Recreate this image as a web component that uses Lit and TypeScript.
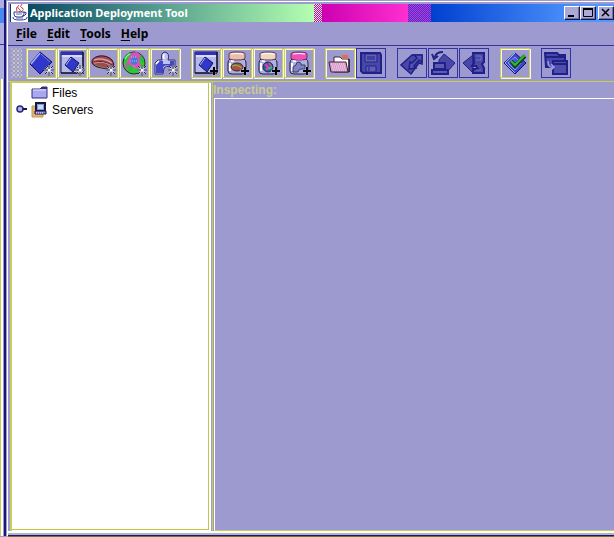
import { LitElement, html, css, svg } from "lit";
import { customElement, property } from "lit/decorators.js";

const star = svg`
  <path d="M20 14v11M15 19h10M17 16l6 6M23 16l-6 6" stroke="#c8c8e8" stroke-width="2"/>
  <path d="M20 14v4M20 21v4M15 19h4M22 19h3M16 15l2 2M22 21l2 2M24 15l-2 2M18 21l-2 2" stroke="#282838" stroke-width="1"/>
  <path d="M19 18h2v2h-2z" fill="#fff"/>`;
const plus = svg`
  <path d="M20 16v9M15 20h10" stroke="#b8b8dc" stroke-width="3" opacity=".6"/>
  <path d="M20 16v8M16 20h8" stroke="#000" stroke-width="2"/>`;
const frame = svg`
  <path d="M1 1h22v21H1z" fill="#b4b8ec" stroke="#181848" stroke-width="1"/>
  <path d="M1 1h22v3H1z" fill="#3030b8"/><path d="M2 5h20" stroke="#fff"/>
  <path d="M1 22h22V1" fill="none" stroke="#000"/>
  <path d="M11 6l8 6-6 9-8-7z" fill="#3038c8" stroke="#101060"/>
  <path d="M11 7l-5 7" stroke="#b0b8ff"/>`;
const jar = (lid: string) => svg`
  <path d="M5 8Q3 9 3 12v8q0 3 4 3h10q4 0 4-3v-8q0-3-2-4z" fill="#b0b0e0" stroke="#202040"/>
  <path d="M5 12v8M6 10h3" stroke="#fff" stroke-width="2"/>
  <path d="M4 3q0-2 8-2t8 2v4q0 2-8 2t-8-2z" fill="${lid}" stroke="#603860"/>
  <path d="M6 3q6-1 12 0" stroke="#fff" fill="none"/>`;
const bean = svg`
  <path d="M1 12Q0 7 8 5q8-1 13 4 3 4 1 7-3 3-11 1-8-1-10-5z" fill="#a04858" stroke="#301020"/>
  <path d="M3 9q9-3 18 3M3 12q10-3 18 3" fill="none" stroke="#d8a090" stroke-width="1.5"/>
  <path d="M3 11q10-2 18 3" fill="none" stroke="#602030"/>
  <path d="M4 14q7 3 13 3" fill="none" stroke="#689038"/>`;

const D = "#202088";
const M = "#4848aa";
const icons: Record<string, unknown> = {
  app: svg`<path d="M11 1l12 10-12 12L1 13z" fill="#3038cc" stroke="#14145c"/>
    <path d="M11 2L2 13" stroke="#a8b0ff" stroke-width="1.5"/><path d="M12 3l9 8" stroke="#7080f0"/>${star}`,
  client: svg`${frame}${star}`,
  bean: svg`${bean}${star}`,
  web: svg`<circle cx="12" cy="12" r="11" fill="#30c830" stroke="#183818"/>
    <path d="M8 2l7-1 5 4-3 6 2 4-5 3-5-3-4 3-3-3 4-5z" fill="#d850b8"/>
    <path d="M12 5l4 3-1 5-4 1-3-4z" fill="#4878d8"/>
    <path d="M3 8q3-5 6-5M5 14l4 3-2 3M18 6l3 5" stroke="#30b840" fill="none" stroke-width="3"/>
    <path d="M3 8q2-4 5-5" stroke="#c8ffc8"/>
    <path d="M9 6h6M8 10h8M11 14l2 3" stroke="#80d8f0" stroke-dasharray="1 1"/>${star}`,
  resource: svg`<path d="M9 9Q7 2 12 1q5 1 3 8h7v7h-5q-4-2-6 1l-1 6H2V12l3-3z" fill="#c0c0f0" stroke="#303070"/>
    <path d="M3 14l3-4h4v3h7v-3h4v5h-4q-6-2-7 2v5H3z" fill="#4048c8"/><path d="M11 3q-1 3 0 5M3 13l3-3" stroke="#fff" stroke-width="1.5" fill="none"/>${star}`,
  addClient: svg`${frame}${plus}`,
  addBean: svg`${jar("#e8c0a8")}<ellipse cx="12" cy="16" rx="6" ry="4" fill="#a85048" stroke="#402020"/>
    <path d="M7 15q5-2 10 2" stroke="#80b040" fill="none" stroke-width="1.5"/>${plus}`,
  addWeb: svg`${jar("#f0d8c0")}<circle cx="12" cy="16" r="5" fill="#3058b8" stroke="#182848"/>
    <path d="M9 13l3 3-2 3M13 12l2 3" stroke="#e040a0" stroke-width="2"/><path d="M12 18l4-2" stroke="#30c858" stroke-width="2"/>${plus}`,
  addResource: svg`${jar("#f050b8")}<path d="M6 6q6 3 12 0" stroke="#f050b8" stroke-width="3"/>
    <path d="M6 21v-5l3-2q0-3 3-3 3 1 2 3h4v4h-3q-3-1-4 3z" fill="#8084c0" stroke="#383868"/>${plus}`,
  open: svg`<path d="M6 6h6l2 2h7v13H6z" fill="#fff" stroke="#402838"/><path d="M14 4h6v4h-6z" fill="#d87058"/>
    <path d="M1 11h17l2 10H3z" fill="#d8a0cc" stroke="#482038"/>
    <path d="M3 13h14M4 15h14M4 17h14M5 19h14" stroke="#f4d8f0" stroke-dasharray="1 1"/><path d="M21 8v13" stroke="#000"/>`,
  save: svg`<path d="M2 2h19l1 2v18H4l-2-2z" fill="${M}" stroke="${D}" stroke-width="2"/>
    <path d="M6 3h12v8H6zM7 15h10v6H7z" fill="#6060b4" stroke="${D}"/><path d="M8 6h8M8 8h8M10 16v4" stroke="${D}"/>`,
  update: svg`<path d="M12 4h10v9l-3-1-8 11L1 14z" fill="${M}" stroke="${D}" stroke-width="1.5"/>
    <path d="M14 4h8v7l-3-2-5 6 2 2-7 1 1-7 2 1 5-5z" fill="#5454b0" stroke="${D}" stroke-width="1.5"/>`,
  deploy: svg`<path d="M13 3l11 9-8 9H8V9z" fill="${M}" stroke="${D}"/><path d="M12 1Q5 1 4 6M1 3l2 5 4-3" fill="none" stroke="${D}" stroke-width="2"/>
    <path d="M3 12h11v6H3zM1 19h16v4H1z" fill="#5c5cb0" stroke="${D}" stroke-width="2"/>`,
  undeploy: svg`<path d="M11 4L1 12l10 10z" fill="${M}" stroke="${D}"/>
    <path d="M11 2h11v9l-2 2 2 4v5H11v-4h5l-2-3h-4l2-3z" fill="${M}" stroke="${D}" stroke-width="2"/><path d="M14 5h5v4h-5M14 19h5" fill="none" stroke="#7070bc"/>`,
  verify: svg`<path d="M12 2l11 10-11 11L1 12z" fill="#3848c8" stroke="#14145c"/>
    <path d="M12 2L2 12l10 10" stroke="#a8b0ff" fill="none"/><path d="M12 6l6 6-6 7-7-7z" fill="#4858e0" stroke="#8898ff"/>
    <path d="M8 10l4 5L22 5" fill="none" stroke="#104010" stroke-width="4"/><path d="M8 10l4 4L22 4" fill="none" stroke="#30b838" stroke-width="2"/>`,
  windows: svg`<path d="M1 2h12l2 2h6v12H2z" fill="${M}" stroke="${D}" stroke-width="2"/><path d="M2 6h18" stroke="${D}" stroke-width="2"/>
    <path d="M9 10h14v13H9z" fill="#5050ac" stroke="${D}" stroke-width="2"/><path d="M9 13h14" stroke="${D}" stroke-width="2"/>
    <path d="M4 10q0 7 5 6M7 13l3 3-3 3" fill="none" stroke="#9c9ae0" stroke-width="1.5"/>`,
};

@customElement("tool-button")
class ToolButton extends LitElement {
  @property() icon = "";
  @property() label = "";
  @property({ type: Boolean }) off = false;
  static styles = css`
    :host { display: block; flex: none; }
    button {
      display: block; width: 30px; height: 30px; margin: 0 1px 1px 0; padding: 2px;
      border: 1px solid #cccf50; background: #9c9ace;
      box-shadow: inset 1px 1px #f8f8e8, 1px 1px #f8f8e8;
    }
    button:disabled { border-color: #3434a0; box-shadow: none; }
    svg { display: block; width: 24px; height: 24px; overflow: visible; fill: none; }
  `;
  render() {
    return html`<button aria-label=${this.label} ?disabled=${this.off}>
      <svg viewBox="0 0 24 24" aria-hidden="true">${icons[this.icon]}</svg>
    </button>`;
  }
}

type Tool = [icon: string, label: string, off?: boolean];
const groups: Tool[][] = [
  [["app", "New application"], ["client", "New client"], ["bean", "New bean"], ["web", "New web component"], ["resource", "New resource"]],
  [["addClient", "Add client"], ["addBean", "Add bean"], ["addWeb", "Add web component"], ["addResource", "Add resource"]],
  [["open", "Open"], ["save", "Save", true]],
  [["update", "Update", true], ["deploy", "Deploy", true], ["undeploy", "Undeploy", true]],
  [["verify", "Verify"]],
  [["windows", "Windows", true]],
];

@customElement("app-root")
class AppRoot extends LitElement {
  static styles = css`
    :host {
      display: grid; grid-template-columns: 7px minmax(0, 1fr); height: 100vh; overflow: hidden;
      background: #9c9ace; color: #000; font: 12px/16px "Liberation Sans", Arial, sans-serif;
    }
    * { box-sizing: border-box; }
    .behind {
      display: flex; flex-direction: column; width: 6px; margin-bottom: 1px;
      border-right: 2px solid #181878; background: #b0aee0;
    }
    .behind-title { height: 15px; margin-top: 8px; background: #4888f0; }
    .behind-menu { height: 22px; border-bottom: 1px solid #3434a0; }
    .behind-page { flex: 1; margin-top: 34px; border-left: 1px solid #c8cc58; border-right: 1px solid #9c9ace; background: #fff; }
    .window {
      display: flex; flex-direction: column; min-width: 0; margin-top: 1px;
      border-top: 1px solid #fff; border-left: 1px solid #fff; border-bottom: 1px solid #707040;
    }
    .title {
      display: flex; align-items: center; height: 18px; flex: none; margin: 2px 0 0 2px; padding-left: 1px;
      color: #fff; font: bold 11px/18px "Noto Sans", sans-serif;
      background: linear-gradient(90deg, #004058, #448c88 40%, #b4ffb0) 0 0 / 304px 100% no-repeat,
        conic-gradient(#d000b0 25%, #d8f0d8 0 50%, #d000b0 0 75%, #d8f0d8 0) 304px 0 / 2px 2px;
    }
    .logo { width: 17px; height: 18px; flex: none; margin-right: 2px; background: #fff; }
    .name { flex: none; width: 284px; margin: 0; font: inherit; white-space: nowrap; }
    .sky {
      display: flex; flex: 1; align-self: stretch; align-items: center; justify-content: flex-end; min-width: 0; margin-left: 8px;
      background:
        linear-gradient(90deg, #cc00b0, #ff30d0) 0 0 / 86px 100% no-repeat,
        linear-gradient(90deg, transparent 109px, #0040d0 109px, #5098ff 90%),
        conic-gradient(#2040d8 25%, #e828cc 0 50%, #2040d8 0 75%, #e828cc 0) 0 0 / 2px 2px;
    }
    .caption {
      width: 16px; height: 14px; padding: 0; border: 1px solid; border-color: #fff #181848 #181848 #fff;
      background: #aca8d8; box-shadow: inset -1px -1px #7070a8;
    }
    .caption:last-child { margin-left: 2px; }
    .caption svg { display: block; width: 14px; height: 12px; fill: none; stroke: #000; }
    .menus { display: flex; gap: 10px; height: 24px; flex: none; padding: 4px 8px 3px; border-bottom: 1px solid #3434a0; }
    .menus button { padding: 0; border: 0; background: none; color: inherit; font: bold 12px/16px "Noto Sans", sans-serif; }
    .menus u { text-underline-offset: 2px; text-decoration-skip-ink: none; }
    .tools { display: flex; gap: 10px; height: 35px; flex: none; padding: 2px 0 0 3px; }
    .grip {
      width: 11px; height: 30px; margin-right: -6px; flex: none;
      background: conic-gradient(#9c9ace 25%, #c8c8cc 0 50%, #9c9ace 0 75%, #b4b4b4 0) 0 0 / 4px 4px;
    }
    .group { display: flex; }
    .body {
      display: grid; grid-template-columns: 201px minmax(0, 1fr); gap: 1px; flex: 1; min-height: 0; padding-left: 2px;
      border-top: 1px solid #c8d040;
    }
    .tree { border-left: 2px solid #c8cc58; border-top: 1px solid #c8cc58; background: #fff; padding: 0 2px 1px 0; }
    .tree-page { height: 100%; border-right: 1px solid #c0c840; border-bottom: 1px solid #c0c840; }
    ul { margin: 0; padding: 1px 0 0 3px; list-style: none; }
    li { display: flex; align-items: center; height: 17px; }
    li svg { flex: none; fill: none; }
    .knob { width: 16px; height: 16px; }
    .kind { width: 17px; height: 16px; margin-right: 4px; }
    .detail { display: flex; flex-direction: column; min-width: 0; border-left: 1px solid #c8d040; }
    .detail h2 { height: 16px; flex: none; margin: 0; color: #c8cc90; font: bold 12px/16px "Liberation Sans", Arial, sans-serif; }
    .view { flex: 1; margin-left: 1px; border-top: 1px solid #fff; border-left: 1px solid #fff; border-bottom: 1px solid #c8cc58; }
    .edge { height: 5px; flex: none; border-top: 2px solid #fff; border-bottom: 1px solid #181878; background: #b4b4bc; }
  `;

  private menu(name: string) {
    return html`<button><u>${name[0]}</u>${name.slice(1)}</button>`;
  }

  private caption(label: string, shape: unknown) {
    return html`<button class="caption" aria-label=${label}><svg viewBox="0 0 14 12">${shape}</svg></button>`;
  }

  render() {
    return html`
      <div class="behind" aria-hidden="true">
        <div class="behind-title"></div><div class="behind-menu"></div><div class="behind-page"></div>
      </div>
      <main class="window">
        <header class="title">
          <svg class="logo" viewBox="0 0 17 18" fill="none" aria-hidden="true">
            <path d="M8 1Q5 3 8 5T8 8M11 0Q8 3 11 4T10 8M6 3q-1 2 0 4" stroke="#d04040"/>
            <path d="M3 8h10v2q0 3-3 3H6q-3 0-3-3zM13 8q3 0 2 2t-4 2M2 13q-1 3 7 3t7-3" stroke="#303888"/>
            <path d="M5 10h6M5 14h7" stroke="#6070b0"/>
          </svg>
          <h1 class="name">Application Deployment Tool</h1>
          <div class="sky">
            ${this.caption("Minimize", svg`<path d="M3 9h6" stroke-width="2"/>`)}
            ${this.caption("Maximize", svg`<path d="M2.5 2.5h9v7h-9z"/><path d="M2 2h10" stroke-width="2"/>`)}
            ${this.caption("Close", svg`<path d="M3 2l7 7M10 2L3 9" stroke-width="1.5"/>`)}
          </div>
        </header>
        <nav class="menus">${["File", "Edit", "Tools", "Help"].map((m) => this.menu(m))}</nav>
        <div class="tools" role="toolbar">
          <div class="grip"></div>
          ${groups.map((g) => html`<div class="group">
            ${g.map(([icon, label, off]) => html`<tool-button icon=${icon} label=${label} ?off=${off ?? false}></tool-button>`)}
          </div>`)}
        </div>
        <div class="body">
          <div class="tree"><div class="tree-page">
            <ul>
              <li>
                <svg class="knob"></svg>
                <svg class="kind" viewBox="0 0 17 16"><path d="M1 4h8l2-2h5v11H1z" fill="#a8a8f0" stroke="#303078"/><path d="M2 5h13" stroke="#e0e0ff"/><path d="M10 3h6" stroke="#303078" stroke-width="2"/></svg>
                Files
              </li>
              <li>
                <svg class="knob" viewBox="0 0 16 16"><circle cx="5" cy="7" r="3" fill="#b0b0f0" stroke="#282870" stroke-width="1.5"/><path d="M8 7h4" stroke="#181838" stroke-width="2"/></svg>
                <svg class="kind" viewBox="0 0 17 16"><path d="M1 4h4v7h7v4H1z" fill="#e8b078" stroke="#c09850"/><path d="M5 1h9v8H5z" fill="#8890e8" stroke="#181838" stroke-width="2"/><path d="M7 3h5v4H7z" fill="#b8e0f8"/><path d="M4 9h11v3H4z" fill="#8080c8" stroke="#181848"/><path d="M5 11h8" stroke="#fff" stroke-dasharray="1 1"/></svg>
                Servers
              </li>
            </ul>
          </div></div>
          <section class="detail"><h2>Inspecting:</h2><div class="view"></div></section>
        </div>
        <div class="edge"></div>
      </main>`;
  }
}
